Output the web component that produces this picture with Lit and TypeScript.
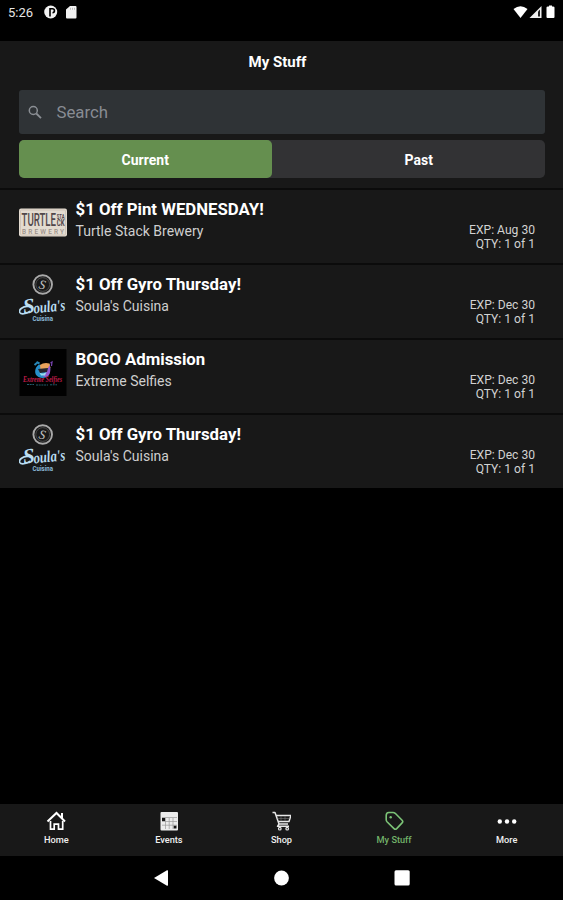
import { LitElement, html, svg, css, nothing } from "lit";
import { customElement, property, state } from "lit/decorators.js";
import { classMap } from "lit/directives/class-map.js";

type Logo = "turtle" | "soula" | "selfies";

interface Deal {
  title: string;
  venue: string;
  expires: string;
  quantity: string;
  logo: Logo;
}

const DEALS: Deal[] = [
  { title: "$1 Off Pint WEDNESDAY!", venue: "Turtle Stack Brewery", expires: "Aug 30", quantity: "1 of 1", logo: "turtle" },
  { title: "$1 Off Gyro Thursday!", venue: "Soula's Cuisina", expires: "Dec 30", quantity: "1 of 1", logo: "soula" },
  { title: "BOGO Admission", venue: "Extreme Selfies", expires: "Dec 30", quantity: "1 of 1", logo: "selfies" },
  { title: "$1 Off Gyro Thursday!", venue: "Soula's Cuisina", expires: "Dec 30", quantity: "1 of 1", logo: "soula" },
];

const LOGOS: Record<Logo, unknown> = {
  turtle: svg`
    <rect x="0" y="10.5" width="48" height="28" rx="2" fill="#e3dbd0"/>
    <rect x="1.5" y="12" width="45" height="25" rx="1" fill="none" stroke="#cbbfb2" stroke-width=".8"/>
    <text x="2.5" y="28" font-family="Roboto, sans-serif" font-size="18.5" font-weight="500" fill="#51474a" textLength="34.500" lengthAdjust="spacingAndGlyphs">TURTLE</text>
    <g font-family="Roboto, sans-serif" font-weight="700" fill="#51474a">
      <text x="37.700" y="20.500" font-size="7.500" textLength="7.800" lengthAdjust="spacingAndGlyphs">STA</text>
      <text x="37.700" y="28" font-size="8.500" textLength="7.800" lengthAdjust="spacingAndGlyphs">CK</text>
    </g>
    <text x="3" y="35.700" font-family="Roboto, sans-serif" font-size="6.500" font-weight="500" fill="#9c9189" textLength="42">BREWERY</text>`,
  soula: svg`
    <circle cx="23.700" cy="11.500" r="9.300" fill="none" stroke="#a9a9a9" stroke-width="1.900"/>
    <circle cx="23.700" cy="11.500" r="6.900" fill="none" stroke="#555" stroke-width=".8"/>
    <text x="20" y="16" transform="rotate(12 23.700 11.500)" font-family="Liberation Serif, serif" font-style="italic" font-size="13" fill="#c0c0c0">S</text>
    <path d="M9 33.500c-5-.5-9.500 3.200-8.300 5.800 1.300 2.500 6.500 1.700 10-1" fill="none" stroke="#b9dcf0" stroke-width="1.700" stroke-linecap="round"/>
    <g transform="rotate(-6 24 36)" font-family="Liberation Serif, serif" font-style="italic" font-weight="700" fill="#b9dcf0">
      <text x="4.500" y="38.500" font-size="21">S</text>
      <text x="14.500" y="39.500" font-size="16" textLength="32" lengthAdjust="spacingAndGlyphs">oula's</text>
    </g>
    <text x="13.500" y="48.300" font-family="Roboto, sans-serif" font-size="6.500" font-weight="700" fill="#8cbcd9" textLength="20.500" lengthAdjust="spacingAndGlyphs">Cuisina</text>`,
  selfies: svg`
    <rect x=".5" y="1" width="47" height="47" fill="#010101"/>
    <path d="M20 16.500c-4.500 3-5.500 10-.5 12.500q4 2 8.500 0c3-2 4-9 2.500-13l-3 2z" fill="#268fc9"/>
    <path d="M21 17q4-3 9.500-1.500l1 4.500-10 1.500z" fill="#e9a25a"/>
    <path d="M30.500 17c2 5 .5 11-3.500 12.300l-3-.8 3.500-5z" fill="#9357cf"/>
    <path d="M19 21l10-1-1 4-7 1z" fill="#26242c"/>
    <path d="M20.500 24.700c2 1.300 5 1 7-.7l-1.500 3.500h-4z" fill="#9bdced"/>
    <path d="M15.500 17l3-2.500 2 1M17.500 13.800l2 1.200" stroke="#2786b5" stroke-width="2" fill="none"/>
    <path d="M31.500 15l1.500-1-.5 4" stroke="#7a45b4" stroke-width="1.200" fill="none"/>
    <text x="4" y="34" font-family="Liberation Serif, serif" font-style="italic" font-weight="700" font-size="9" fill="#c01c4a" textLength="39" lengthAdjust="spacingAndGlyphs">Extreme Selfies</text>
    <path d="M8 36.500h7M17 37h12M31 36.800h7" stroke="#286879" stroke-width=".9" stroke-dasharray="2 .7"/>`,
};

@customElement("deal-row")
class DealRow extends LitElement {
  @property({ attribute: false }) deal!: Deal;

  static styles = css`
    :host { display: flex; box-sizing: border-box; height: 73px; padding: 7.5px 28px 0 19px; background: #181818; }
    .logo { flex: none; width: 48px; height: 50px; margin-right: 8.5px; }
    .info { flex: 1; }
    .title { font-size: 16.8px; line-height: 22px; font-weight: 700; color: #fff; white-space: nowrap; }
    .venue { font-size: 14px; line-height: 22px; color: #cfcfcf; }
    .meta { padding-top: 25px; font-size: 12.1px; line-height: 14px; color: #d2d2d2; text-align: right; white-space: nowrap; }
  `;

  render() {
    const { title, venue, expires, quantity, logo } = this.deal;
    return html`
      <svg class="logo" viewBox="0 0 48 50">${LOGOS[logo]}</svg>
      <div class="info">
        <div class="title">${title}</div>
        <div class="venue">${venue}</div>
      </div>
      <div class="meta">
        <div>EXP: ${expires}</div>
        <div>QTY: ${quantity}</div>
      </div>`;
  }
}

const TABS = [
  {
    label: "Home",
    icon: svg`<path d="M1.500 10.500L10.500 2l8.500 8.500M16 7V2" fill="none" stroke="#fff" stroke-width="2"/>
      <path d="M4.500 10v8.200h3.700v-5h4.300v5h4.200V10" fill="none" stroke="#fff" stroke-width="1.700"/>`,
  },
  {
    label: "Events",
    icon: svg`<rect x="1.500" y="1" width="17.500" height="18.500" rx="1" fill="#ececec"/>
      <path d="M6.500 7v11M10.200 7v11M14 7v11M3 10.500h15M3 14.200h15M3 6.500h15" stroke="#999" stroke-width=".7"/>
      <path d="M3 7h3v3H3zM14.700 14.700h2.800v2.800h-2.800z" fill="#181818"/>`,
  },
  {
    label: "Shop",
    icon: svg`<path d="M1.500 1.500h2.500l4 11.500h9M5 4.500H20l-2 6H7.200M8 13l-1.500 2.300h11.500" fill="none" stroke="#e8e8e8" stroke-width="1.500" stroke-linejoin="round"/>
      <path d="M10 5v5M14 5v5M6.500 7.500h12" stroke="#777" stroke-width=".6"/>
      <circle cx="8.800" cy="17.700" r="1.300" fill="none" stroke="#e8e8e8" stroke-width="1.200"/>
      <circle cx="16.200" cy="17.700" r="1.300" fill="none" stroke="#e8e8e8" stroke-width="1.200"/>`,
  },
  {
    label: "My Stuff",
    icon: svg`<path d="M2.200 4.500Q2.200 1.700 4.800 1.500H9q1.300 0 2.200.8l6.900 6.900q1.300 1.400 0 2.700l-5.400 5.700q-1.400 1.300-2.700 0L3 10.800q-.8-.9-.8-2z" fill="none" stroke="#7cc477" stroke-width="1.600" stroke-linejoin="round"/>
      <circle cx="6.700" cy="6.300" r="1.200" fill="#7cc477"/>`,
  },
  {
    label: "More",
    icon: svg`<circle cx="2.800" cy="10.500" r="2.200" fill="#fff"/><circle cx="10" cy="10.500" r="2.200" fill="#fff"/><circle cx="17.200" cy="10.500" r="2.200" fill="#fff"/>`,
  },
];

@customElement("app-root")
class AppRoot extends LitElement {
  @state() private segment = "Current";
  @state() private tab = "My Stuff";

  static styles = css`
    :host { display: flex; flex-direction: column; height: 900px; background: #000; color: #fff; font-family: Roboto, sans-serif; overflow: hidden; }
    .status { display: flex; align-items: flex-start; box-sizing: border-box; height: 41px; padding: 4px 7px 0 8px; }
    .clock { width: 36px; font-size: 13px; line-height: 18px; color: #e6e6e6; }
    .status-icon { height: 16px; }
    .spacer { flex: 1; }
    .top { height: 147px; box-sizing: border-box; padding: 0 18px 0 19px; background: #181818; }
    .heading { margin: 0; padding: 10px 9px 17px 0; font-size: 15px; line-height: 22px; font-weight: 700; text-align: center; }
    .search { display: flex; align-items: center; box-sizing: border-box; height: 44px; padding-left: 8px; border-radius: 3px; background: #2f3336; color: #888c93; font-size: 16.800px; line-height: 44px; }
    .search-icon { width: 16px; height: 16px; margin-right: 13.500px; }
    .segments { display: flex; height: 38px; margin-top: 6px; border-radius: 5px; background: #323234; }
    .segment { width: 252.500px; border-radius: 5px; line-height: 40px; font-size: 14px; font-weight: 700; text-align: center; }
    .segment.rest { flex: 1; width: auto; padding-left: 21px; }
    .segment.on { background: #658f4f; }
    .list { display: flex; flex-direction: column; gap: 2px; padding-top: 2px; background: #0b0b0b; }
    .fill { flex: 1; }
    .tabs { display: grid; grid-template-columns: repeat(5, 1fr); height: 52px; background: #181818; }
    .tab { display: flex; flex-direction: column; align-items: center; padding-top: 7px; font-size: 9.200px; line-height: 13px; font-weight: 500; color: #f0f0f0; }
    .tab.on { color: #72b269; }
    .tab-icon { width: 20px; height: 20px; margin-bottom: 2px; }
    .nav { display: flex; justify-content: center; height: 44px; }
    .nav-icon { width: 263px; height: 44px; }
  `;

  render() {
    return html`
      <div class="status">
        <div class="clock">5:26</div>
        <svg class="status-icon" width="34" viewBox="0 0 34 16">
          <circle cx="6.700" cy="8" r="6.500" fill="#f2f2f2"/>
          <path d="M6 12.500V4.800h2.500a1.900 1.900 0 0 1 0 3.900" fill="none" stroke="#000" stroke-width="1.600"/>
          <path d="M26 2h5.500q1 0 1 1v10.500q0 1-1 1h-8.500q-1 0-1-1V5.500z" fill="#f2f2f2"/>
          <path d="M26.500 3.800v2M28.500 3.800v2M30.500 3.800v2" stroke="#999" stroke-width=".6"/>
        </svg>
        <div class="spacer"></div>
        <svg class="status-icon" width="44" viewBox="0 0 44 16">
          <path d="M1.500 5q7-5.500 14 0L8.500 14z" fill="#fff"/>
          <path d="M17.500 14L29.500 2V14z" fill="#f0f0f0"/>
          <path d="M26 7.500l2-2V12.500h-2z" fill="#222"/>
          <path d="M36 2.500h1V1.500h3v1h1q1.500 0 1.500 1v9.500q0 1-1 1h-6q-1 0-1-1V3.500q0-1 1.500-1z" fill="#fff"/>
        </svg>
      </div>
      <div class="top">
        <h1 class="heading">My Stuff</h1>
        <div class="search">
          <svg class="search-icon" viewBox="0 0 16 16">
            <circle cx="6.300" cy="6.500" r="4" fill="none" stroke="#8b8f94" stroke-width="1.500"/>
            <path d="M9.300 9.500l4.700 4.700" stroke="#8b8f94" stroke-width="1.800"/>
          </svg>
          <span>Search</span>
        </div>
        <div class="segments">
          ${["Current", "Past"].map((name, i) => html`
            <div class=${classMap({ segment: true, rest: i > 0, on: this.segment === name })}
              @click=${() => (this.segment = name)}>${name}</div>`)}
        </div>
      </div>
      <div class="list">
        ${this.segment === "Current" ? DEALS.map((deal) => html`<deal-row .deal=${deal}></deal-row>`) : nothing}
      </div>
      <div class="fill"></div>
      <div class="tabs">
        ${TABS.map(({ label, icon }) => html`
          <div class=${classMap({ tab: true, on: this.tab === label })} @click=${() => (this.tab = label)}>
            <svg class="tab-icon" viewBox="0 0 20 20">${icon}</svg>
            <span>${label}</span>
          </div>`)}
      </div>
      <div class="nav">
        <svg class="nav-icon" viewBox="0 0 263 44">
          <path d="M4 22L17 14.300Q18 14 18 15v14q0 1-1 .7z" fill="#fff"/>
          <circle cx="131.500" cy="22" r="7.400" fill="#fff"/>
          <rect x="244.500" y="14.300" width="15.200" height="15.200" rx="1.500" fill="#fff"/>
        </svg>
      </div>`;
  }
}
